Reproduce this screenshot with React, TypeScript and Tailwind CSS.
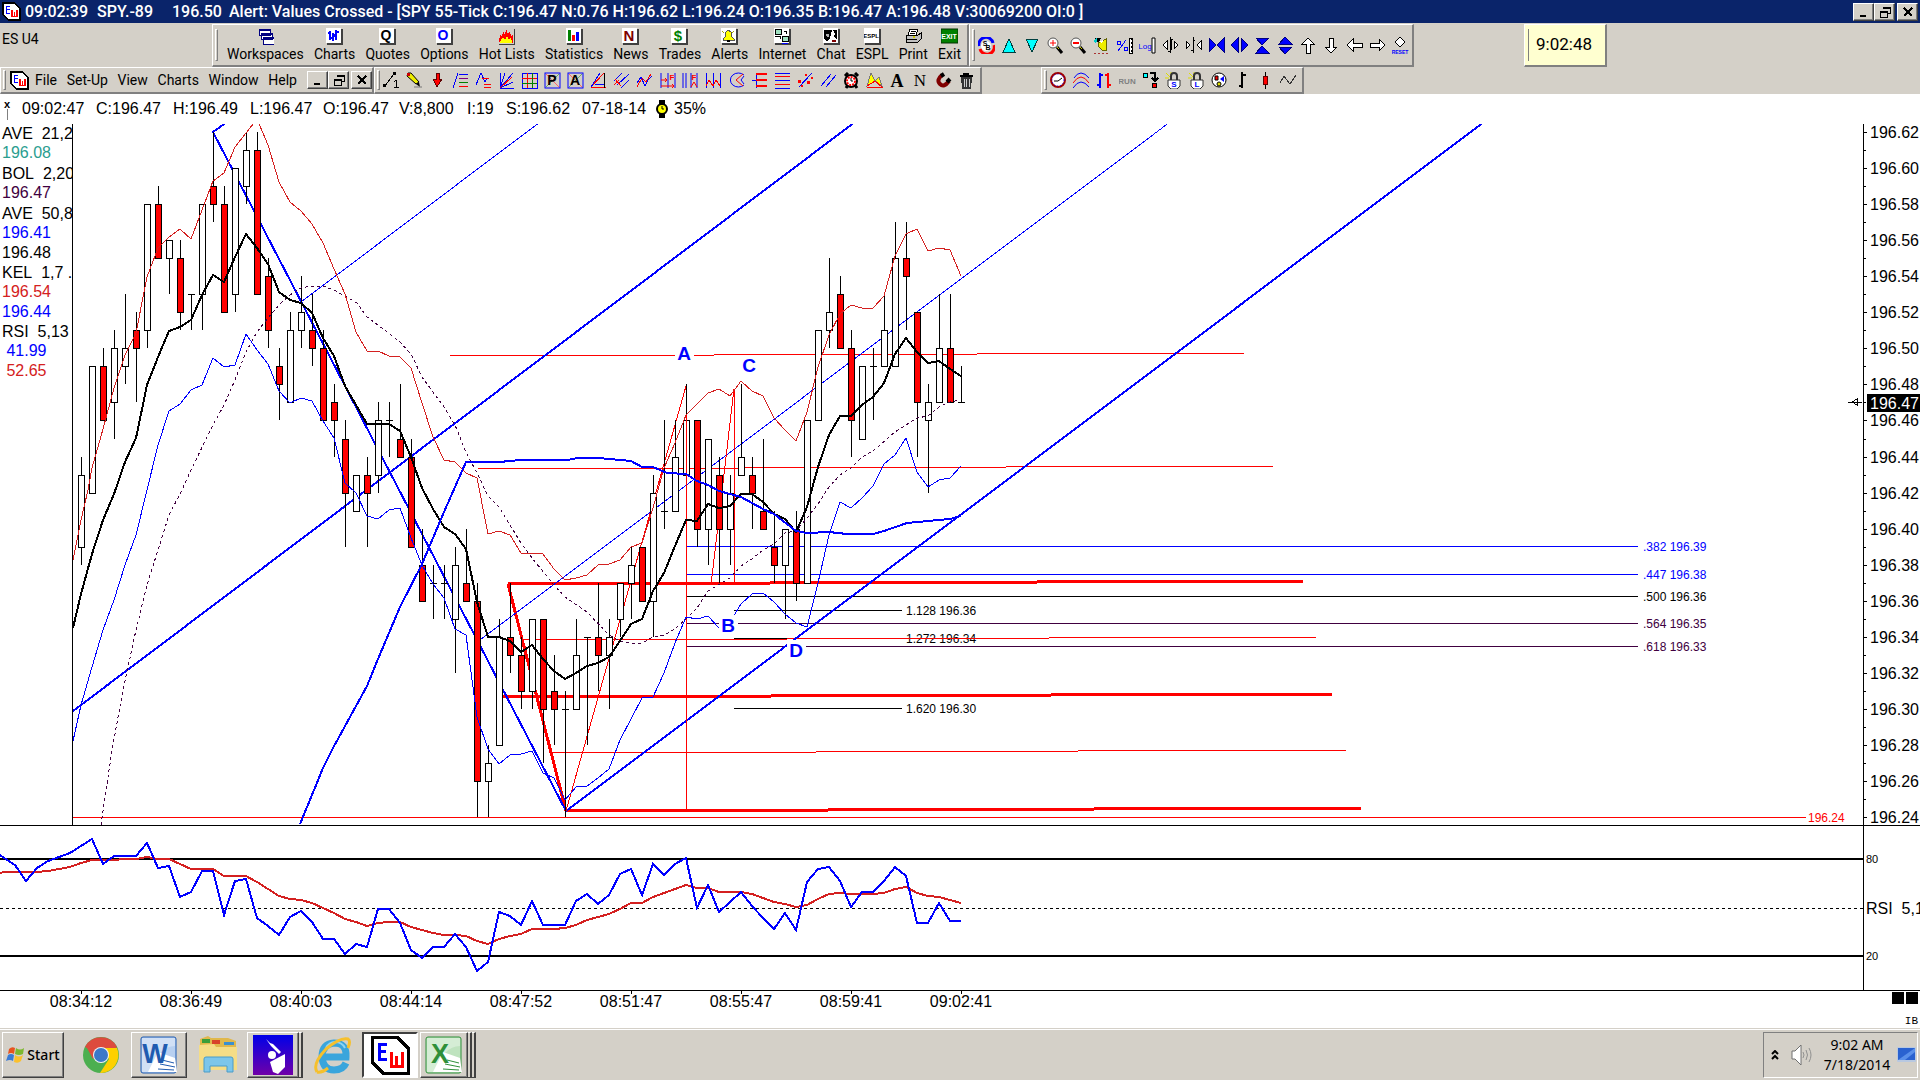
import React from "react";

type Pt = [number, number];
type Kids = { children?: React.ReactNode };

const BLUE = "#0000ff";
const RED = "#ff0000";

/* ---------- icons ---------- */

function Ico({ children, s = 17, fine = false }: Kids & { s?: number; fine?: boolean }) {
  return (
    <svg
      width={s}
      height={s}
      viewBox="0 0 17 17"
      fill="none"
      shapeRendering={fine ? "auto" : "crispEdges"}
      className="block shrink-0"
      aria-hidden="true"
    >
      {children}
    </svg>
  );
}

function Ln({ d, c = BLUE, w = 1 }: { d: string; c?: string; w?: number }) {
  return <path d={d} stroke={c} strokeWidth={w} fill="none" />;
}

function Tx({ t, x, y, z, c = "#000", b = true, f = "Liberation Sans" }: { t: string; x: number; y: number; z: number; c?: string; b?: boolean; f?: string }) {
  return (
    <text x={x} y={y} fontSize={z} fill={c} fontWeight={b ? 700 : 400} fontFamily={`"${f}", sans-serif`} textAnchor="middle">
      {t}
    </text>
  );
}

function Tile() {
  return (
    <>
      <rect x="1" y="1" width="16" height="16" fill="#404040" />
      <rect x="0" y="0" width="15" height="15" fill="#fff" />
    </>
  );
}

function EwLogo({ className }: { className: string }) {
  return (
    <svg viewBox="0 0 40 40" className={className} shapeRendering="crispEdges" aria-hidden="true">
      <path d="M2 2H27L38 13V38H13L2 27Z" fill="#fff" stroke="#000" strokeWidth="3" />
      <path d="M17 9H9V24H17M9 16H16" stroke={BLUE} strokeWidth="3" fill="none" />
      <path d="M21 17V31H32V17M26 21V31" stroke={RED} strokeWidth="3" fill="none" />
    </svg>
  );
}

const mainTools: [string, React.ReactNode][] = [
  ["Workspaces", <Ico key="i"><path d="M2 1H13V7H2Z M4 5H15V11H4Z M6 9H17V16H6Z" fill="#fff" stroke="#000080" /><path d="M2 2H13M4 6H15M6 10H17" stroke="#000080" strokeWidth="2" /></Ico>],
  ["Charts", <Ico key="i"><Tile /><Ln d="M4 3V12M2 5H4M4 10H7M7 5V13M7 5L10 10M10 2V12M10 4H13M8 8H10" w={2} /></Ico>],
  ["Quotes", <Ico key="i" fine><Tile /><Tx t="Q" x={7} y={12} z={14} /></Ico>],
  ["Options", <Ico key="i" fine><Tile /><Tx t="O" x={7} y={12} z={14} c={BLUE} /></Ico>],
  ["Hot Lists", <Ico key="i"><path d="M1 13L2 7L4 9L5 3L7 7L8 1L10 6L12 3L13 8L15 6V15H2Z" fill="#f00" /><path d="M2 14L5 9L7 12L9 8L11 12L13 9L14 15H2Z" fill="#ff0" /><path d="M16 1V16H1" stroke="#404040" /></Ico>],
  ["Statistics", <Ico key="i"><Tile /><path d="M2 2H5V13H2Z" fill="#008000" /><path d="M6 7H9V13H6Z" fill={RED} /><path d="M10 4H13V13H10Z" fill={BLUE} /></Ico>],
  ["News", <Ico key="i" fine><Tile /><Tx t="N" x={7} y={13} z={15} c="#800000" /></Ico>],
  ["Trades", <Ico key="i" fine><Tile /><Tx t="$" x={7} y={13} z={15} c="#008000" /></Ico>],
  ["Alerts", <Ico key="i"><Tile /><path d="M7 2L10 4L11 9L13 11V12H2V11L4 9L5 4Z" fill="#ff0" stroke="#555" /><path d="M6 13H9" stroke="#000" strokeWidth="2" /><path d="M1 3L3 5M13 3L11 5" stroke="#aa0" /></Ico>],
  ["Internet", <Ico key="i"><Tile /><path d="M1 1H7V6H1Z M8 8H14V13H8Z" fill="#9fe0c0" stroke="#000" /><path d="M3 8H6V11M10 3H12V6M1 8H7" stroke="#000" /><path d="M8 15H14" stroke={BLUE} strokeWidth="1" /></Ico>],
  ["Chat", <Ico key="i"><Tile /><path d="M1 2H9L8 6L7 10L4 14L1 10Z M10 2H14V12L11 9L12 6Z" fill="#000" /><path d="M3 6H6V9H4Z" fill="#b0b0b0" /><path d="M9 13H13" stroke="#800000" strokeWidth="2" /></Ico>],
  ["ESPL", <Ico key="i" fine><Tile /><Tx t="ESPL" x={7} y={10} z={6} f="Liberation Sans" /></Ico>],
  ["Print", <Ico key="i"><path d="M5 1H13L11 7H3Z" fill="#fff" stroke="#000" /><path d="M1 7H13L16 5V11L13 14H1Z" fill="#c0c0c0" stroke="#000" /><path d="M2 11H12M6 3H11M5 5H10" stroke="#000" /><path d="M8 9H10" stroke="#cc0" strokeWidth="2" /></Ico>],
  ["Exit", <Ico key="i" fine><rect x="0" y="1" width="17" height="14" fill="#008000" stroke="#003000" /><Tx t="EXIT" x={8} y={11} z={7} c="#fff" /></Ico>],
];

const glass = (
  <>
    <circle cx="6" cy="6" r="5" fill="#fff" stroke="#555" />
    <path d="M10 10L15 16" stroke="#000" strokeWidth="3" />
    <path d="M10 10L12 12" stroke="#cc0" strokeWidth="1" />
  </>
);
const hollow = { fill: "#fff", stroke: "#000" };

const navTools: [string, React.ReactNode][] = [
  ["Symbol link", <Ico key="i" fine><path d="M1 9A7 7 0 0 1 15 6" stroke={BLUE} strokeWidth="3" /><path d="M16 8A7 7 0 0 1 2 12" stroke={RED} strokeWidth="3" /><circle cx="8" cy="9" r="5" fill="#fff" /><Tx t="S" x={7} y={9} z={7} /><Tx t="B" x={10} y={13} z={7} /></Ico>],
  ["Up", <Ico key="i"><path d="M8 2L14 15H2Z" fill="#0ff" stroke="#004040" /></Ico>],
  ["Down", <Ico key="i"><path d="M8 15L14 2H2Z" fill="#0ff" stroke="#004040" /></Ico>],
  ["Zoom in", <Ico key="i" fine>{glass}<path d="M3 6H9M6 3V9" stroke={RED} /></Ico>],
  ["Zoom out", <Ico key="i" fine>{glass}<path d="M3 6H9" stroke={RED} strokeWidth="2" /></Ico>],
  ["Find", <Ico key="i"><path d="M2 1H8L6 5H2Z" fill="#000" /><path d="M1 3L4 1V5L2 6Z" fill="#0cc" /><path d="M5 6L13 2V13L9 13L6 10Z" fill="#ee0" stroke="#660" /><path d="M7 4L10 3L9 7Z" fill="#fff" /><path d="M1 16H16" stroke="#a33" strokeDasharray="2 2" /></Ico>],
  ["Percent scale", <Ico key="i"><path d="M2 14L10 3M1 4H4V7H1ZM8 10H11V13H8Z" stroke={BLUE} /><path d="M13 1H16V16H13Z" fill="#fff" stroke="#000" /><path d="M15 1V16" stroke="#000" strokeDasharray="2 2" /></Ico>],
  ["Log scale", <Ico key="i" fine><Tx t="Log" x={6} y={12} z={8} c={BLUE} b={false} /><path d="M13 1H16V16H13Z" fill="#fff" stroke="#000" /></Ico>],
  ["Widen bars", <Ico key="i"><path d="M5 4V12L1 8Z M12 4V12L16 8Z" {...hollow} /><path d="M8 0V16M9 3V13M6 14H8M9 2H11" stroke="#000" /></Ico>],
  ["Narrow bars", <Ico key="i"><path d="M1 4V12L5 8Z M16 4V12L12 8Z" {...hollow} /><path d="M8 0V16M6 13H8M8 3H10" stroke="#000" /></Ico>],
  ["Compress", <Ico key="i"><path d="M1 1V15L8 8Z M16 1V15L9 8Z" fill="#00f" stroke="#000080" /></Ico>],
  ["Expand", <Ico key="i"><path d="M7 1V15L0 8Z M10 1V15L17 8Z" fill="#00f" stroke="#000080" /></Ico>],
  ["Compress vertically", <Ico key="i"><path d="M2 1H15L8 8Z M2 16H15L8 9Z" fill="#00f" stroke="#000080" /></Ico>],
  ["Expand vertically", <Ico key="i"><path d="M2 7H15L8 0Z M2 10H15L8 17Z" fill="#00f" stroke="#000080" /></Ico>],
  ["Move up", <Ico key="i"><path d="M8 1L14 7H10V16H6V7H2Z" {...hollow} /></Ico>],
  ["Move down", <Ico key="i"><path d="M8 16L14 10H10V1H6V10H2Z" {...hollow} /></Ico>],
  ["Move left", <Ico key="i"><path d="M1 8L7 2V6H16V10H7V14Z" {...hollow} /></Ico>],
  ["Move right", <Ico key="i"><path d="M16 8L10 2V6H1V10H10V14Z" {...hollow} /></Ico>],
  ["Reset", <Ico key="i" fine><path d="M8 0L13 5L8 10L3 5Z" {...hollow} /><Tx t="RESET" x={8} y={17} z={5} c={BLUE} /></Ico>],
];

const drawTools: [string, React.ReactNode][] = [
  ["Line", <Ico key="i"><path d="M2 14L11 2" stroke="#000" /><path d="M0 12H3V15H0ZM10 0H13V3H10Z" fill="#000" /><path d="M13 8V15M11 10L13 8M11 15H16" stroke="#000" /></Ico>],
  ["Pencil", <Ico key="i" fine><path d="M2 1L5 1L13 10L10 12L1 4Z" fill="#ee0" stroke="#000" /><path d="M1 1H4V4H1Z" fill="#c00" /><path d="M10 12L13 10L14 15Z" fill="#000" /><path d="M8 15H16" stroke="#777" /></Ico>],
  ["Arrow", <Ico key="i"><path d="M7 1H10V7H13L8 15L4 7H7Z" fill={RED} stroke="#600000" /></Ico>],
  ["Fibonacci retracement", <Ico key="i"><Ln d="M1 16L6 1" /><Ln d="M7 2H16" /><Ln d="M7 6H16" c="#800080" /><Ln d="M7 10H16" c="#008000" /><Ln d="M7 14H16" c={RED} /></Ico>],
  ["Extension", <Ico key="i"><Ln d="M1 13L6 1L10 10L12 6" /><Ln d="M7 6H14M9 12H16M9 15H16" c={RED} /></Ico>],
  ["Gann fan", <Ico key="i"><Ln d="M2 1V16L15 10M2 16H16" /><Ln d="M2 16L7 1M2 16L15 1" /><Ln d="M2 16L14 5" c={RED} /></Ico>],
  ["Grid", <Ico key="i"><Ln d="M1 1H16V16H1Z" /><Ln d="M1 6H16M6 1V16" c={RED} /><Ln d="M1 11H16M11 1V16" c="#008000" /></Ico>],
  ["Pivot", <Ico key="i" fine><rect x="1" y="1" width="15" height="15" stroke={BLUE} fill="none" /><Ln d="M2 2L15 15" c="#f66" /><Ln d="M2 15L15 2" c="#6a6" /><Tx t="P" x={8} y={13} z={14} /></Ico>],
  ["Andrews", <Ico key="i" fine><rect x="1" y="1" width="15" height="15" stroke={BLUE} fill="none" /><Ln d="M2 2L15 15" c="#f66" /><Ln d="M2 15L15 2" c="#6a6" /><Tx t="A" x={8} y={13} z={14} /></Ico>],
  ["Angle", <Ico key="i"><Ln d="M1 15L14 1M1 15H16" c={RED} /><Ln d="M1 15L10 1M5 12L14 12" /><path d="M14 1V16" stroke="#000" /></Ico>],
  ["Pitchfork", <Ico key="i"><Ln d="M1 9L9 1M4 13L16 2M8 16L16 8" /><Ln d="M2 7L8 14M1 13L6 8" c={RED} /></Ico>],
  ["Zig zag", <Ico key="i"><Ln d="M1 15L6 6L10 10L15 2" c={RED} /><Ln d="M1 11L5 5L9 14L12 8L16 4" /></Ico>],
  ["Time projection", <Ico key="i" fine><Ln d="M2 1V16M9 1V16M16 1V16" /><Ln d="M2 8H8M2 14H15M6 6L8 8L6 10M13 12L15 14L13 16" c={RED} /><Tx t="F" x={13} y={8} z={8} c={RED} /></Ico>],
  ["Fibonacci time", <Ico key="i" fine><Ln d="M1 1V16M4 1V16M9 1V16M15 1V16" /><Ln d="M9 15L12 10L15 15" c={RED} /><Tx t="F" x={12} y={8} z={8} c={RED} /></Ico>],
  ["Cycles", <Ico key="i"><Ln d="M1 1V16M8 1V16M15 1V16" /><Ln d="M1 14L4 8L6 11L8 14L11 8L13 11L15 14" c={RED} /></Ico>],
  ["Arc", <Ico key="i" fine><Ln d="M16 3A8 7 0 1 0 16 13" /><Ln d="M15 2L8 8L15 14" c={RED} /><Ln d="M16 4L13 8L16 12" /></Ico>],
  ["Projection", <Ico key="i"><Ln d="M5 1V16M1 8H5" /><Ln d="M5 2H16M5 8H16M5 14H16" c={RED} w={2} /></Ico>],
  ["Levels", <Ico key="i"><Ln d="M1 1H16M1 16H16M1 8H16" /><Ln d="M1 4H16M1 12H16" c={RED} /></Ico>],
  ["Regression", <Ico key="i"><Ln d="M2 15L15 1" /><path d="M1 8H4V11H1ZM8 2H10V4H8ZM10 9H13V12H10ZM14 5H16V7H14ZM4 13H6V15H4Z" fill={RED} /></Ico>],
  ["Parallel lines", <Ico key="i"><Ln d="M1 14L11 2M6 15L16 3" /></Ico>],
  ["Alarm", <Ico key="i" fine><path d="M2 4L5 1M15 4L12 1M3 16L5 13M14 16L12 13" stroke="#000" strokeWidth="3" /><circle cx="8" cy="9" r="6" fill="#fff" stroke="#000" strokeWidth="2" /><circle cx="8" cy="9" r="4" stroke={RED} strokeWidth="2" strokeDasharray="2 1" /><path d="M8 6V9H10" stroke="#000" /></Ico>],
  ["Pattern", <Ico key="i"><path d="M1 14L5 1L9 9L13 5L16 14L9 9Z" fill="#ff0" stroke="#777" /><Ln d="M1 14L9 9L16 15L1 15" c={RED} /></Ico>],
  ["Bold text", <Ico key="i" fine><Tx t="A" x={8} y={15} z={18} f="Liberation Serif" /></Ico>],
  ["Text note", <Ico key="i" fine><Tx t="N" x={8} y={14} z={17} b={false} f="Liberation Serif" /></Ico>],
  ["Magnet", <Ico key="i" fine><path d="M7 3Q1 8 5 12Q9 16 14 9" stroke="#800000" strokeWidth="4" /><path d="M6 4L9 2M12 10L15 7" stroke="#000" strokeWidth="4" /></Ico>],
  ["Delete", <Ico key="i"><path d="M2 4H15M5 2H11" stroke="#000" strokeWidth="2" /><path d="M3 5H14L13 17H4Z" fill="#333" /><path d="M6 7V15M8 7V15M11 7V15" stroke="#ccc" /></Ico>],
];

const lock = (t: string) => (
  <Ico fine>
    <path d="M1 1L5 5M0 6H4M6 0V3" stroke="#dd0" />
    <path d="M6 8V4Q6 1 9 1T12 4V8" stroke="#333" strokeWidth="2" />
    <path d="M3 8H15V14L12 17H6L3 14Z" fill="#fff" stroke="#333" />
    <Tx t={t} x={9} y={15} z={8} c={BLUE} />
  </Ico>
);

const studyTools: [string, React.ReactNode][] = [
  ["Time", <Ico key="i" fine><circle cx="8" cy="8" r="7" fill="#fff" stroke="#a00000" strokeWidth="2" /><circle cx="8" cy="8" r="6" stroke={BLUE} strokeDasharray="1 2" /><path d="M4 9L8 9L12 6" stroke="#000" /></Ico>],
  ["Bands", <Ico key="i" fine><Ln d="M1 6Q4 1 8 1T16 6M0 16Q4 10 8 10T16 15" /><Ln d="M0 11Q4 5 8 5T16 11" c={RED} /></Ico>],
  ["Bars", <Ico key="i"><Ln d="M4 1V16M1 13H4M4 3H7" w={2} /><Ln d="M12 1V16M9 3H12M12 13H15" c={RED} w={2} /></Ico>],
  ["Run", <Ico key="i" fine><Tx t="RUN" x={8} y={12} z={8} c="#808080" /></Ico>],
  ["Transfer", <Ico key="i"><path d="M1 1H5V5H1Z" fill="#0ff" stroke="#000" /><path d="M10 11H14V15H10Z" fill={RED} stroke="#000" /><path d="M8 1H13V7M10 6L13 9L16 6" stroke="#000" strokeWidth="2" /></Ico>],
  ["Lock short", <React.Fragment key="i">{lock("S")}</React.Fragment>],
  ["Lock long", <React.Fragment key="i">{lock("L")}</React.Fragment>],
  ["Shapes", <Ico key="i" fine><circle cx="8" cy="8" r="7" fill="#fff" stroke="#000" /><path d="M4 4H7V8H4Z" fill={RED} stroke="#000" /><path d="M13 4V10L9 7Z" fill={BLUE} /><circle cx="8" cy="12" r="2" fill="#dd0" stroke="#000" /></Ico>],
  ["Bar style", <Ico key="i"><path d="M8 0V16M5 14H8M8 3H12" stroke="#000" strokeWidth="2" /></Ico>],
  ["Candle style", <Ico key="i"><path d="M8 0V17" stroke="#000" /><path d="M6 4H10V12H6Z" fill={RED} stroke="#600000" /></Ico>],
  ["Line style", <Ico key="i"><path d="M0 11L4 4L10 12L16 3" stroke="#333" /></Ico>],
];

/* ---------- toolbar pieces ---------- */

function Bar({ children, className = "" }: Kids & { className?: string }) {
  return (
    <div className={`flex items-center border-2 border-t-white border-l-white border-r-[#808080] border-b-[#808080] border-t border-l ${className}`}>
      <span className="ml-[2px] h-[80%] w-[3px] shrink-0 border border-t-white border-l-white border-r-[#808080] border-b-[#808080]" />
      {children}
    </div>
  );
}

function Tools({ items }: { items: [string, React.ReactNode][] }) {
  return (
    <>
      {items.map(([name, icon]) => (
        <button key={name} type="button" aria-label={name} className="flex h-[22px] w-[23px] shrink-0 items-center justify-center">
          {icon}
        </button>
      ))}
    </>
  );
}

const raised = "border border-t-white border-l-white border-r-[#404040] border-b-[#404040] bg-[#d4d0c8] shadow-[inset_-1px_-1px_0_#808080]";

function WinButtons() {
  const cls = `flex h-[18px] w-[21px] items-center justify-center ${raised}`;
  return (
    <div className="flex shrink-0">
      <button type="button" aria-label="Minimize" className={cls}>
        <svg width="12" height="12" shapeRendering="crispEdges"><path d="M2 9H8V11H2Z" fill="#000" /></svg>
      </button>
      <button type="button" aria-label="Restore" className={cls}>
        <svg width="12" height="12" shapeRendering="crispEdges"><path d="M4 1H11V7H9M4 1V3M4 2H11" stroke="#000" fill="none" /><path d="M1 5H8V11H1ZM1 6H8" stroke="#000" fill="none" /></svg>
      </button>
      <button type="button" aria-label="Close" className={`ml-[2px] ${cls}`}>
        <svg width="12" height="12" shapeRendering="crispEdges"><path d="M2 2L10 10M10 2L2 10" stroke="#000" strokeWidth="2" /></svg>
      </button>
    </div>
  );
}

/* ---------- chart data ---------- */

const barX = (i: number) => 81 + 11 * i;
const levelY = (n: number) => Math.round(132 + 18.03 * n);

/* high, body top, body bottom, low (cents below 196.62), falling */
const candles: [number, number, number, number, number][] = [
  [18, 19, 23, 24, 0], [13, 13, 20, 20, 0], [12, 13, 16, 16, 1], [11, 12, 15, 17, 0], [9, 12, 13, 14, 0],
  [10, 11, 12, 15, 1], [4, 4, 11, 12, 0], [3, 4, 7, 7, 1], [6, 6, 7, 9, 0], [6, 7, 10, 11, 1],
  [9, 9, 9, 11, 0], [4, 4, 9, 11, 0], [0, 3, 4, 5, 1], [3, 4, 10, 10, 1], [2, 2, 9, 10, 0],
  [0, 1, 3, 4, 0], [0, 1, 9, 9, 1], [7, 8, 11, 12, 1], [12, 13, 14, 16, 1], [10, 11, 15, 15, 0],
  [8, 10, 11, 12, 0], [9, 11, 12, 13, 1], [11, 12, 16, 16, 1], [14, 15, 16, 18, 1], [16, 17, 20, 23, 1],
  [19, 19, 21, 21, 0], [18, 19, 20, 23, 1], [15, 16, 19, 20, 0], [15, 16, 16, 18, 0], [14, 17, 18, 18, 1],
  [17, 18, 23, 23, 1], [22, 24, 26, 26, 1], [24, 25, 25, 27, 0], [24, 25, 25, 27, 0], [23, 24, 27, 30, 0],
  [22, 25, 26, 26, 1], [25, 26, 36, 38, 1], [34, 35, 36, 38, 0], [27, 28, 34, 34, 0], [25, 28, 29, 30, 1],
  [28, 29, 31, 32, 1], [27, 27, 31, 32, 0], [27, 27, 32, 35, 1], [29, 31, 32, 34, 1], [31, 32, 32, 38, 0],
  [27, 29, 32, 32, 0], [28, 28, 28, 34, 0], [25, 28, 29, 31, 1], [27, 28, 29, 32, 0], [25, 25, 27, 28, 0],
  [23, 24, 25, 27, 0], [23, 23, 26, 26, 1], [19, 20, 26, 28, 0], [16, 21, 21, 22, 0], [16, 18, 21, 21, 0],
  [14, 16, 19, 19, 0], [16, 16, 22, 23, 1], [17, 17, 22, 24, 0], [18, 19, 22, 25, 1], [19, 20, 22, 24, 0],
  [14, 18, 19, 19, 0], [18, 19, 20, 22, 1], [17, 21, 22, 22, 1], [21, 23, 24, 25, 1], [22, 22, 24, 27, 0],
  [21, 22, 25, 26, 1], [16, 16, 25, 25, 0], [11, 11, 16, 16, 0], [7, 10, 11, 12, 0], [8, 9, 12, 12, 1],
  [11, 12, 16, 18, 1], [13, 13, 17, 17, 0], [12, 13, 13, 16, 0], [9, 11, 13, 13, 0], [5, 7, 13, 13, 0],
  [5, 7, 8, 11, 1], [10, 10, 15, 18, 1], [14, 15, 16, 20, 0], [9, 12, 15, 15, 0], [9, 12, 15, 15, 1], [13, 15, 15, 15, 0],
];

const average =
  "73,628 81,594 92,554 103,520 114,494 125,462 136,438 147,385 158,357 169,331 180,327 191,320 202,295 213,275 224,282 235,257 246,234 257,248 268,264 279,292 290,300 301,303 312,313 323,338 334,356 345,386 367,424 378,424 389,424 400,431 411,457 422,488 433,509 444,527 455,534 466,549 477,602 488,637 499,637 510,641 521,652 532,645 543,659 554,671 565,679 576,673 587,666 598,663 609,657 620,641 631,624 642,619 653,591 664,573 675,546 686,520 697,521 708,504 719,508 730,506 741,494 752,494 763,502 774,514 785,519 796,532 807,507 818,467 829,435 840,416 851,416 862,405 873,397 884,383 895,354 906,338 917,352 928,363 939,361 950,369 961,376";
const upperBand =
  "73,560 81,520 88,490 92,468 103,429 114,388 125,355 136,333 147,277 158,248 169,237 180,229 191,239 202,210 213,181 224,173 235,147 246,133 257,119 268,145 279,182 290,202 301,211 312,224 323,243 334,269 345,294 356,332 367,351 378,351 389,356 400,357 411,368 422,403 433,437 444,460 455,462 466,473 477,478 488,534 499,531 510,535 521,553 543,554 554,569 565,580 576,578 587,575 598,565 609,564 620,560 631,547 642,543 653,508 664,468 675,443 686,415 697,404 708,393 719,389 730,396 741,381 752,391 763,396 774,418 785,430 796,441 807,412 818,367 829,335 840,314 851,305 862,308 873,308 884,296 895,256 906,234 917,229 928,251 939,248 950,250 961,276";
const lowerBand =
  "73,741 81,705 92,667 103,630 114,600 125,565 136,535 147,490 158,445 169,411 180,404 191,390 202,385 213,358 224,367 235,365 246,334 257,350 268,364 279,391 290,403 301,398 312,401 323,421 334,438 345,483 356,493 367,516 378,519 389,510 400,508 411,538 422,565 433,584 444,598 455,629 466,635 477,717 488,749 499,764 510,755 521,754 532,751 543,773 554,778 565,800 576,787 587,786 598,778 609,769 620,740 642,698 653,697 664,673 675,643 686,617 697,619 708,616 719,628 730,622 741,604 752,594 763,593 774,602 785,614 796,623 807,627 818,583 829,535 840,502 851,508 862,498 873,486 884,464 895,455 906,438 917,472 928,487 939,480 950,478 961,466";
const middleBand =
  "101,825 112,750 123,690 136,630 147,585 158,550 169,515 182,490 191,470 213,425 224,405 235,380 246,352 257,332 268,318 279,305 290,295 301,288 312,286 323,286 334,290 345,296 357,303 367,317 378,325 400,342 411,354 422,377 433,392 444,407 455,425 466,452 477,473 488,496 499,507 521,543 532,558 554,585 565,597 587,612 609,635 620,641 631,643 642,643 653,637 664,635 675,629 686,619 697,608 708,591 730,578 741,566 752,559 763,550 774,544 785,533 796,531 807,518 818,504 829,487 840,475 851,468 862,457 873,451 895,432 917,418 928,416 939,407 950,402 960,400";
const slowAverage =
  "300,824 312,795 323,768 333,748 350,717 367,686 378,659 400,607 422,564 444,512 466,462 499,462 521,460 567,460 578,458 598,458 631,461 642,467 653,467 667,473 686,474 697,481 708,485 719,491 741,497 763,509 774,514 796,531 807,533 829,532 847,534 873,534 884,531 907,523 928,521 950,519 961,516";

const rsiFast = [
  33, 40, 56, 43, 36, 32, 28, 21, 14, 39, 31, 31, 31, 18, 43, 41, 72, 67, 46, 46, 90, 56, 54, 93, 101, 110, 92, 86, 97, 114, 114, 129,
  119, 122, 84, 84, 98, 125, 133, 122, 122, 109, 122, 146, 137, 87, 91, 100, 76, 100, 100, 100, 76, 69, 79, 70, 49, 44, 70, 39, 50, 39,
  33, 83, 60, 87, 77, 67, 81, 93, 104, 88, 105, 57, 44, 42, 56, 82, 67, 67, 56, 42, 51, 98, 98, 78, 96, 96,
];
const rsiSlow = [
  47, 47, 47, 47, 46, 44, 42, 38, 35, 35, 35, 34, 34, 32, 34, 34, 39, 44, 44, 44, 51, 51, 51, 57, 64, 71, 74, 75, 78, 83, 88, 94, 97,
  101, 98, 97, 97, 102, 105, 108, 110, 110, 111, 116, 119, 114, 111, 109, 104, 104, 104, 103, 100, 95, 92, 89, 84, 78, 78, 72, 68, 64,
  60, 63, 63, 67, 67, 67, 69, 73, 77, 79, 82, 80, 74, 69, 68, 69, 69, 69, 68, 64, 62, 68, 71, 72, 75, 78,
];
const rsiPath = (v: number[], first: number) => `0,${first} ` + v.map((y, k) => `${barX(k - 7)},${y - 1}`).join(" ");

const fibs: [string, number, string][] = [
  [".382 196.39", 546, BLUE], [".447 196.38", 574, BLUE], [".500 196.36", 596, "#000"],
  [".564 196.35", 623, "#400040"], [".618 196.33", 646, "#400040"],
];
const extensions: [string, number][] = [["1.128 196.36", 610], ["1.272 196.34", 638], ["1.620 196.30", 708]];
const waves: [string, number, number][] = [["A", 684, 353], ["C", 749, 365], ["B", 728, 625], ["D", 796, 650]];
const thinReds: [Pt, Pt][] = [
  [[450, 356], [1244, 353]], [[478, 469], [1273, 466]], [[523, 640], [1316, 637]], [[553, 753], [1346, 750]],
];
const thickReds: [Pt, Pt][] = [[[508, 584], [1303, 581]], [[508, 584], [566, 811]], [[496, 697], [1332, 694]], [[566, 811], [1361, 808]]];

function Seg({ a, b, c, w = 1 }: { a: Pt; b: Pt; c: string; w?: number }) {
  return <line x1={a[0]} y1={a[1]} x2={b[0]} y2={b[1]} stroke={c} strokeWidth={w} />;
}

function PriceChart() {
  return (
    <svg className="h-[701px] min-w-0 flex-1 overflow-hidden" shapeRendering="crispEdges" fontFamily='"Liberation Sans", sans-serif' role="img" aria-label="SPY 55-Tick">
      <g transform="translate(-72 -124)">
        <rect x="72" y="124" width="1" height="701" fill="#000" />
        {fibs.map(([t, y, c]) => (
          <g key={t}>
            <Seg a={[686, y]} b={[1638, y]} c={c} />
            <text x="1643" y={y + 5} fontSize="12" fill={c}>{t}</text>
          </g>
        ))}
        {extensions.map(([t, y]) => (
          <g key={t}>
            <Seg a={[734, y]} b={[902, y]} c="#000" />
            <text x="906" y={y + 5} fontSize="12">{t}</text>
          </g>
        ))}
        {thinReds.map(([a, b]) => <Seg key={a[0]} a={a} b={b} c={RED} />)}
        {thickReds.map(([a, b]) => <Seg key={a.join() + b.join()} a={a} b={b} c={RED} w={3} />)}
        <Seg a={[73, 817]} b={[1806, 817]} c={RED} />
        <text x="1808" y="822" fontSize="12" fill={RED}>196.24</text>
        <Seg a={[73, 711]} b={[855, 122]} c={BLUE} w={2} />
        <Seg a={[566, 811]} b={[1484, 122]} c={BLUE} w={2} />
        <polyline points="227,122 213,132 566,811" fill="none" stroke={BLUE} strokeWidth="2" />
        <Seg a={[301, 302]} b={[540, 122]} c={BLUE} />
        <Seg a={[480, 640]} b={[1170, 122]} c={BLUE} />
        <Seg a={[566, 811]} b={[686, 386]} c={RED} />
        <Seg a={[711, 585]} b={[734, 389]} c={RED} />
        {candles.map(([h, t, b, l, down], i) => {
          const x = barX(i);
          return (
            <g key={i}>
              <rect x={x} y={levelY(h)} width="1" height={levelY(l) - levelY(h)} fill="#000" />
              <rect x={x - 3} y={levelY(t)} width="7" height={levelY(b) - levelY(t) + 1} fill="#000" />
              {b > t && <rect x={x - 2} y={levelY(t) + 1} width="5" height={levelY(b) - levelY(t) - 1} fill={down ? RED : "#fff"} />}
            </g>
          );
        })}
        <Seg a={[686, 415]} b={[686, 810]} c={RED} />
        <Seg a={[734, 389]} b={[734, 585]} c={RED} />
        <polyline points={middleBand} fill="none" stroke="#400040" strokeDasharray="3 3" />
        <polyline points={upperBand} fill="none" stroke="#d42020" />
        <polyline points={lowerBand} fill="none" stroke={BLUE} />
        <polyline points={average} fill="none" stroke="#000" strokeWidth="2" />
        <polyline points={slowAverage} fill="none" stroke={BLUE} strokeWidth="2" />
        {waves.map(([t, x, y]) => (
          <g key={t}>
            <rect x={x - 9} y={y - 10} width="19" height="20" fill="#fff" />
            <text x={x} y={y + 7} fontSize="19" fontWeight="700" fill={BLUE} textAnchor="middle">{t}</text>
          </g>
        ))}
      </g>
    </svg>
  );
}

const axisPrices = Array.from({ length: 20 }, (_, k) => (196.62 - k * 0.02).toFixed(2));

function PriceAxis() {
  return (
    <svg className="h-[701px] w-[74px] shrink-0" shapeRendering="crispEdges" fontFamily='"Liberation Sans", sans-serif' fontSize="16">
      <g transform="translate(-1846 -124)">
        <rect x="1863" y="124" width="1" height="701" fill="#000" />
        {Array.from({ length: 39 }, (_, n) => (
          <rect key={n} x="1864" y={levelY(n)} width={n % 2 ? 2 : 3} height="1" fill="#000" />
        ))}
        {axisPrices.map((p, k) => <text key={p} x="1870" y={levelY(2 * k) + 6}>{p}</text>)}
        <rect x="1867" y="394" width="53" height="18" fill="#000" />
        <text x="1870" y="409" fill="#fff">196.47</text>
        <path d="M1848 402H1862M1857 399L1852 402L1857 405Z" stroke="#000" fill="#fff" />
      </g>
    </svg>
  );
}

function RsiPanel() {
  return (
    <div className="flex h-[166px] border-y border-black">
      <svg className="h-full min-w-0 flex-1 overflow-hidden" shapeRendering="crispEdges" role="img" aria-label="RSI">
        <rect x="0" y="32" width="100%" height="2" fill="#000" />
        <rect x="0" y="129" width="100%" height="2" fill="#000" />
        <line x1="0" y1="82" x2="100%" y2="82" stroke="#000" strokeDasharray="3 3" />
        <polyline points={rsiPath(rsiSlow, 47)} fill="none" stroke="#d42020" strokeWidth="2" />
        <polyline points={rsiPath(rsiFast, 29)} fill="none" stroke={BLUE} strokeWidth="2" />
      </svg>
      <div className="flex w-[57px] shrink-0 flex-col overflow-hidden border-l border-black pl-[2px] whitespace-nowrap">
        <span className="mt-[26px] text-[11px] leading-[14px]">80</span>
        <span className="mt-[33px] text-[16px] leading-[20px]">RSI&nbsp; 5,13</span>
        <span className="mt-[30px] text-[11px] leading-[14px]">20</span>
      </div>
    </div>
  );
}

const legend: [string, [string, string][]][] = [
  ["AVE\u00a0 21,2", [["196.08", "text-[#2a9d8f]"]]],
  ["BOL\u00a0 2,20", [["196.47", "text-[#400040]"]]],
  ["AVE\u00a0 50,8", [["196.41", "text-[#0000ff]"], ["196.48", "text-black"]]],
  ["KEL\u00a0 1,7 .", [["196.54", "text-[#d42020]"], ["196.44", "text-[#0000ff]"]]],
  ["RSI\u00a0 5,13", [["\u00a041.99", "text-[#0000ff]"], ["\u00a052.65", "text-[#d42020]"]]],
];

const readout: [string, string][] = [
  ["09:02:47", "w-[74px]"], ["C:196.47", "w-[77px]"], ["H:196.49", "w-[77px]"], ["L:196.47", "w-[73px]"], ["O:196.47", "w-[76px]"],
  ["V:8,800", "w-[68px]"], ["I:19", "w-[39px]"], ["S:196.62", "w-[76px]"], ["07-18-14", "w-[74px]"],
];

const times = ["08:34:12", "08:36:49", "08:40:03", "08:44:14", "08:47:52", "08:51:47", "08:55:47", "08:59:41", "09:02:41"];

/* ---------- task bar ---------- */

function TaskButton({ name, children, stack = 0, pressed = false }: Kids & { name: string; stack?: number; pressed?: boolean }) {
  return (
    <button type="button" aria-label={name} className="flex h-[46px] w-[56px]">
      <span className={pressed ? "flex h-full flex-1 items-center justify-center border-2 border-t-[#404040] border-l-[#404040] border-r-white border-b-white bg-white" : `flex h-full flex-1 items-center justify-center ${raised}`}>
        {children}
      </span>
      {Array.from({ length: stack }, (_, k) => (
        <span key={k} className="h-full w-[4px] border-r-2 border-b border-[#404040] border-t border-t-white bg-[#d4d0c8]" />
      ))}
    </button>
  );
}

function StartFlag() {
  return (
    <svg viewBox="0 0 20 18" className="h-[18px] w-[20px]" aria-hidden="true">
      <path d="M3 3Q6 0 9 2L8 8Q5 6 2 8Z" fill="#e8531f" />
      <path d="M10 2Q14 5 18 2L17 8Q13 10 9 8Z" fill="#7cb82f" />
      <path d="M2 9Q5 7 8 9L7 15Q4 13 0 15Z" fill="#3a7bd5" />
      <path d="M9 9Q13 12 17 9L15 15Q12 18 8 16Z" fill="#fbc02d" />
    </svg>
  );
}

function Chrome() {
  return (
    <svg viewBox="0 0 36 36" className="h-[36px] w-[36px]" aria-hidden="true">
      <circle cx="18" cy="18" r="18" fill="#4caf50" />
      <path d="M18 18L2 10A18 18 0 0 1 34 10Z" fill="#dd4b3e" />
      <path d="M3 9L10 22L18 12H34A18 18 0 0 0 3 9Z" fill="#dd4b3e" />
      <path d="M34 11H18L26 22L17 36A18 18 0 0 0 34 11Z" fill="#fdd000" />
      <circle cx="18" cy="18" r="8" fill="#f4f4f4" />
      <circle cx="18" cy="18" r="7" fill="#3b78c9" />
    </svg>
  );
}

function Doc({ letter, c, bg }: { letter: string; c: string; bg: string }) {
  return (
    <svg viewBox="0 0 38 38" className="h-[38px] w-[38px]" aria-hidden="true">
      <rect x="1" y="1" width="35" height="36" rx="2" fill={bg} stroke={c} />
      <path d="M2 2H35V10Q18 10 12 36H2Z" fill="#fff" opacity="0.35" />
      <path d="M18 16L35 22L37 36H8Z" fill="#fff" />
      <path d="M22 24L34 27M20 28L35 31M18 33L34 34" stroke={c} />
      <text x="15" y="27" fontSize="27" fontWeight="700" fontFamily='"Liberation Sans", sans-serif' fill={c} textAnchor="middle">{letter}</text>
    </svg>
  );
}

function Folder() {
  return (
    <svg viewBox="0 0 40 40" className="h-[40px] w-[40px]" aria-hidden="true">
      <path d="M2 4L10 1L13 3H30L38 6V34H2Z" fill="#e0b84c" />
      <path d="M4 4H12V8H4Z" fill="#3a9e3a" /><path d="M14 5H22V9H14Z" fill="#d8432a" /><path d="M26 7H36V10H26Z" fill="#3a8fd0" />
      <path d="M1 10L16 9L18 12H39V35H1Z" fill="#f5dd86" />
      <path d="M6 24Q6 22 8 22H33Q35 22 35 24V37H29V31H12V37H6Z" fill="#7cc6ea" stroke="#4a9cc8" />
    </svg>
  );
}

function Painter() {
  return (
    <svg viewBox="0 0 40 40" className="h-[40px] w-[40px]" aria-hidden="true">
      <defs><linearGradient id="pg" x1="0" y1="0" x2="0" y2="1"><stop offset="0" stopColor="#0000e8" /><stop offset="1" stopColor="#7000a8" /></linearGradient></defs>
      <rect width="40" height="40" fill="url(#pg)" />
      <path d="M13 4L17 8L20 9L28 17L26 19L18 11Z" fill="#fff" />
      <circle cx="19" cy="20" r="4" fill="#fff" />
      <path d="M17 27L32 19V32L25 39L20 37Z" fill="#fff" />
    </svg>
  );
}

function Explorer() {
  return (
    <svg viewBox="0 0 38 38" className="h-[38px] w-[38px]" fill="none" aria-hidden="true">
      <path d="M9 21H32Q33 7 20 7Q8 8 8 21Q9 34 20 34Q29 34 32 27" stroke="#3aa5dc" strokeWidth="7" />
      <path d="M12 12Q15 6 21 6Q28 6 31 12" stroke="#8fd4f4" strokeWidth="2" />
      <path d="M3 36Q-2 28 12 13Q26 1 34 3Q37 5 34 12" stroke="#f6c02c" strokeWidth="3" />
      <path d="M3 36Q8 37 14 32" stroke="#f6c02c" strokeWidth="3" />
    </svg>
  );
}

export default function App() {
  return (
    <div className="flex min-h-screen w-full flex-col overflow-hidden bg-white font-['Liberation_Sans',Arial,sans-serif] text-[16px] text-black">
      <header className="bg-[#d4d0c8] font-[Roboto,Tahoma,sans-serif]">
        <div className="flex h-[23px] items-center bg-[#0a246a] pr-[2px] pl-[2px] text-[16px] leading-[22px] font-medium whitespace-pre text-white">
          <EwLogo className="mr-[4px] h-[19px] w-[19px]" />
          <span className="w-[72px]">09:02:39</span>
          <span className="w-[75px]">SPY.-89</span>
          <span className="w-[57px]">196.50</span>
          <span className="flex-1">Alert: Values Crossed - [SPY 55-Tick C:196.47 N:0.76 H:196.62 L:196.24 O:196.35 B:196.47 A:196.48 V:30069200 OI:0 ]</span>
          <WinButtons />
        </div>
        <div className="flex h-[44px] items-stretch pt-px text-[14px]">
          <div className="w-[212px] shrink-0 pt-[5px] pl-[2px] leading-[20px]">ES U4</div>
          <Bar className="w-[757px] shrink-0">
            <div className="flex flex-1 items-center justify-between pr-[6px] pl-[9px]">
              {mainTools.map(([name, icon]) => (
                <button key={name} type="button" className="flex flex-col items-center leading-[18px] whitespace-nowrap">
                  {icon}
                  {name}
                </button>
              ))}
            </div>
          </Bar>
          <Bar className="w-[445px] shrink-0"><Tools items={navTools} /></Bar>
          <div className="ml-[110px] flex w-[83px] shrink-0 items-center border-2 border-t border-l border-t-white border-l-white border-r-[#808080] border-b-[#808080] bg-[#ffffd0] text-[17px]">
            <span className="mr-[7px] ml-[2px] h-[80%] w-[2px] border-r border-[#808080]" />
            9:02:48
          </div>
        </div>
        <div className="flex h-[27px] items-stretch text-[14px]">
          <Bar className="w-[374px] shrink-0">
            <EwLogo className="mr-[6px] ml-[4px] h-[19px] w-[19px]" />
            <nav className="mr-[10px] flex flex-1 justify-between leading-[20px] whitespace-nowrap">
              {["File", "Set-Up", "View", "Charts", "Window", "Help"].map((m) => (
                <button key={m} type="button">{m}</button>
              ))}
            </nav>
            <WinButtons />
          </Bar>
          <Bar className="w-[608px] shrink-0"><Tools items={drawTools} /></Bar>
          <div className="w-[59px] shrink-0" />
          <Bar className="w-[263px] shrink-0"><Tools items={studyTools} /></Bar>
        </div>
      </header>

      <main className="flex flex-1 flex-col">
        <div className="flex h-[30px] items-center">
          <div className="flex w-[22px] flex-col items-start pl-[4px]">
            <span className="text-[11px] leading-[10px] font-bold">x</span>
            <span className="ml-[3px] h-[11px] w-px bg-[#808080]" />
          </div>
          {readout.map(([t, w]) => <span key={t} className={`${w} leading-[20px]`}>{t}</span>)}
          <svg width="12" height="18" viewBox="0 0 12 18" aria-hidden="true">
            <path d="M3 0H9V4H3ZM3 14H9V18H3Z" fill="#000" />
            <circle cx="6" cy="9" r="5" fill="#ff0" stroke="#000" strokeWidth="2" />
            <path d="M6 6V9H8" stroke="#000" fill="none" />
          </svg>
          <span className="ml-[6px]">35%</span>
        </div>
        <div className="flex">
          <aside className="w-[72px] shrink-0 overflow-hidden pl-[2px] whitespace-nowrap">
            {legend.map(([name, vals], k) => (
              <React.Fragment key={k}>
                <div className="leading-[20px]">{name}</div>
                {vals.map(([v, c], j) => <div key={v} className={j ? `pb-[2px] leading-[17px] ${c}` : `pb-[2px] leading-[18px] ${c}`}>{v}</div>)}
              </React.Fragment>
            ))}
          </aside>
          <PriceChart />
          <PriceAxis />
        </div>
        <RsiPanel />
        <div className="flex flex-1 items-start">
          <div className="flex flex-1 pl-[26px]">
            {times.map((t) => (
              <div key={t} className="flex w-[110px] flex-col items-center leading-[15px]">
                <span className="h-[3px] w-px bg-black" />
                {t}
              </div>
            ))}
          </div>
          <div className="flex flex-col items-end pr-[2px]">
            <div className="flex gap-[2px] pt-px">
              <span className="h-[12px] w-[12px] bg-black" />
              <span className="h-[12px] w-[12px] bg-black" />
            </div>
            <span className="pt-[10px] font-['Liberation_Mono',monospace] text-[11px] leading-[14px]">IB</span>
          </div>
        </div>
      </main>

      <footer className="flex h-[52px] items-center border-t border-[#d4d0c8] bg-[#d4d0c8] pr-[2px] pl-[2px] font-['Noto_Sans',Tahoma,sans-serif] shadow-[inset_0_1px_0_#ffffff]">
        <button type="button" className={`flex h-[46px] w-[62px] items-center justify-center gap-px text-[14px] font-medium ${raised}`}>
          <StartFlag />
          Start
        </button>
        <button type="button" aria-label="Chrome" className="mr-[12px] ml-[19px]"><Chrome /></button>
        <TaskButton name="Word"><Doc letter="W" c="#1f5bb0" bg="#b8d0f0" /></TaskButton>
        <button type="button" aria-label="Folders" className="mr-[9px] ml-[11px]"><Folder /></button>
        <TaskButton name="Painter" stack={1}><Painter /></TaskButton>
        <button type="button" aria-label="Internet Explorer" className="mr-[10px] ml-[11px]"><Explorer /></button>
        <TaskButton name="EW" pressed><EwLogo className="h-[40px] w-[40px]" /></TaskButton>
        <span className="w-[2px]" />
        <TaskButton name="Excel" stack={2}><Doc letter="X" c="#2f8f3a" bg="#bfe3bf" /></TaskButton>
        <div className="ml-auto flex h-[46px] w-[155px] items-center border border-t-[#808080] border-l-[#808080] border-r-white border-b-white pl-[7px]">
          <svg width="8" height="10" viewBox="0 0 8 10" fill="none" stroke="#000" strokeWidth="2" aria-hidden="true"><path d="M1 4L4 1L7 4M1 9L4 6L7 9" /></svg>
          <svg width="22" height="22" viewBox="0 0 22 22" className="ml-[12px]" fill="none" aria-hidden="true">
            <path d="M1 7H4L10 1V21L4 15H1Z" fill="#fff" stroke="#707070" />
            <path d="M12 8Q14 11 12 14M15 6Q18 11 15 16M18 4Q22 11 18 18" stroke="#909090" />
          </svg>
          <div className="flex-1 pl-[4px] text-center text-[14px] leading-[20px]">
            <div>9:02 AM</div>
            <div>7/18/2014</div>
          </div>
          <svg width="20" height="16" viewBox="0 0 20 16" aria-hidden="true">
            <rect width="19" height="15" rx="1" fill="#b8c8e0" /><rect x="1" y="1" width="17" height="12" fill="#2a62d0" />
            <path d="M1 13L18 1V5L8 13Z" fill="#5a90ea" />
          </svg>
        </div>
      </footer>
    </div>
  );
}
